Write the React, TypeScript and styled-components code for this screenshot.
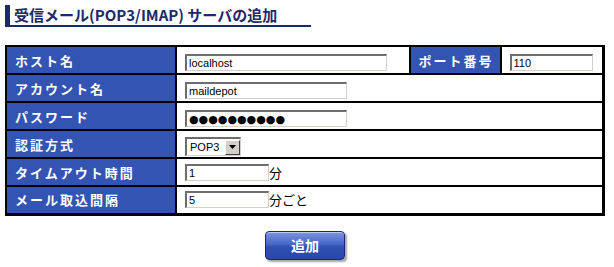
import React from "react";
import styled, { createGlobalStyle } from "styled-components";

const GlobalStyle = createGlobalStyle`
  body {
    margin: 0;
    background: #ffffff;
    font-family: "Noto Sans CJK JP", "Liberation Sans", sans-serif;
  }
`;

export default function App() {
  return (
    <Page>
      <GlobalStyle />
      <Title>受信メール(POP3/IMAP) サーバの追加</Title>
      <FormTable>
        <tbody>
          <Row>
            <Label>ホスト名</Label>
            <Value>
              <TextInput width={202} defaultValue="localhost" />
            </Value>
            <Label narrow>ポート番号</Label>
            <Value last>
              <TextInput width={83} defaultValue="110" />
            </Value>
          </Row>
          <Row>
            <Label>アカウント名</Label>
            <Value colSpan={3} last>
              <TextInput width={162} defaultValue="maildepot" />
            </Value>
          </Row>
          <Row>
            <Label>パスワード</Label>
            <Value colSpan={3} last>
              <TextInput width={162} masked readOnly value="●●●●●●●●●●" />
            </Value>
          </Row>
          <Row>
            <Label>認証方式</Label>
            <Value colSpan={3} last>
              <Select>
                <SelectText>POP3</SelectText>
                <SelectArrow>
                  <svg width="9" height="5" viewBox="0 0 9 5">
                    <path d="M1 0h7L4.5 4z" fill="#000" />
                  </svg>
                </SelectArrow>
              </Select>
            </Value>
          </Row>
          <Row>
            <Label>タイムアウト時間</Label>
            <Value colSpan={3} last>
              <Inline>
                <TextInput width={84} defaultValue="1" />
                <Unit>分</Unit>
              </Inline>
            </Value>
          </Row>
          <Row>
            <Label bottom>メール取込間隔</Label>
            <Value colSpan={3} last bottom>
              <Inline>
                <TextInput width={84} defaultValue="5" />
                <Unit>分ごと</Unit>
              </Inline>
            </Value>
          </Row>
        </tbody>
      </FormTable>
      <ButtonRow>
        <AddButton>追加</AddButton>
      </ButtonRow>
    </Page>
  );
}

const Page = styled.div`
  width: 614px;
  height: 267px;
  padding: 5px 0 0 5px;
  box-sizing: border-box;
  overflow: hidden;
`;

const Title = styled.h1`
  margin: 0;
  width: 306px;
  height: 22px;
  box-sizing: border-box;
  border-left: 5px solid #1b2a6b;
  border-bottom: 2px solid #1b2a6b;
  padding-left: 4px;
  font-size: 15px;
  line-height: 19px;
  font-weight: bold;
  color: #1b2a6b;
  white-space: nowrap;
`;

const FormTable = styled.table`
  margin-top: 18px;
  width: 600px;
  border-collapse: collapse;
  border-left: 2px solid #000;
  border-top: 2px solid #000;
`;

const Row = styled.tr`
  height: 28px;
`;

const Label = styled.th<{ narrow?: boolean; bottom?: boolean }>`
  width: ${(p) => (p.narrow ? "91px" : "170px")};
  height: 28px;
  padding: 0 0 0 8px;
  box-sizing: border-box;
  background: #3354b2;
  color: #ffffff;
  font-size: 13px;
  font-weight: bold;
  letter-spacing: 2px;
  text-align: left;
  border-right: 2px solid #000;
  border-bottom: ${(p) => (p.bottom ? "3px" : "2px")} solid #000;
  white-space: nowrap;
`;

const Value = styled.td<{ last?: boolean; bottom?: boolean }>`
  padding: 0 0 0 8px;
  height: 28px;
  box-sizing: border-box;
  border-right: ${(p) => (p.last ? "3px" : "2px")} solid #000;
  border-bottom: ${(p) => (p.bottom ? "3px" : "2px")} solid #000;
`;

const TextInput = styled.input<{ width: number; masked?: boolean }>`
  width: ${(p) => p.width}px;
  height: 17px;
  box-sizing: border-box;
  padding: 0 2px;
  margin: 0;
  border-style: solid;
  border-width: 2px 1px 1px 2px;
  border-color: #6e6e6e #d4d0c8 #d4d0c8 #6e6e6e;
  font-family: ${(p) => (p.masked ? '"DejaVu Sans", sans-serif' : '"Liberation Sans", Arial, sans-serif')};
  font-size: 11px;
  letter-spacing: 0;
  color: #000;
  background: #fff;
  vertical-align: middle;
  outline: none;
`;

const Inline = styled.div`
  display: flex;
  align-items: center;
`;

const Unit = styled.span`
  font-size: 13px;
  color: #000;
  line-height: 17px;
`;

const Select = styled.div`
  display: inline-flex;
  align-items: center;
  width: 56px;
  height: 19px;
  box-sizing: border-box;
  border-style: solid;
  border-width: 2px 1px 1px 2px;
  border-color: #6e6e6e #d4d0c8 #d4d0c8 #6e6e6e;
  background: #fff;
  vertical-align: middle;
`;

const SelectText = styled.span`
  flex: 1;
  padding-left: 3px;
  font-family: "Liberation Sans", Arial, sans-serif;
  font-size: 11px;
  color: #000;
`;

const SelectArrow = styled.span`
  width: 15px;
  height: 15px;
  box-sizing: border-box;
  display: flex;
  align-items: center;
  justify-content: center;
  background: #d4d0c8;
  border-style: solid;
  border-width: 1px;
  border-color: #fff #404040 #404040 #fff;
`;

const ButtonRow = styled.div`
  width: 600px;
  display: flex;
  justify-content: center;
  margin-top: 15px;
`;

const AddButton = styled.button`
  width: 80px;
  height: 29px;
  border-radius: 4px;
  border: 1px solid #1a2777;
  background: linear-gradient(#7e96dc 0%, #4766c8 45%, #3050b5 55%, #2a46a8 100%);
  box-shadow: 2px 2px 2px rgba(0, 0, 0, 0.35), inset 0 1px 0 rgba(255, 255, 255, 0.5);
  color: #fff;
  font-family: "Noto Sans CJK JP", sans-serif;
  font-size: 14px;
  font-weight: bold;
  cursor: pointer;
  padding: 0;
`;
